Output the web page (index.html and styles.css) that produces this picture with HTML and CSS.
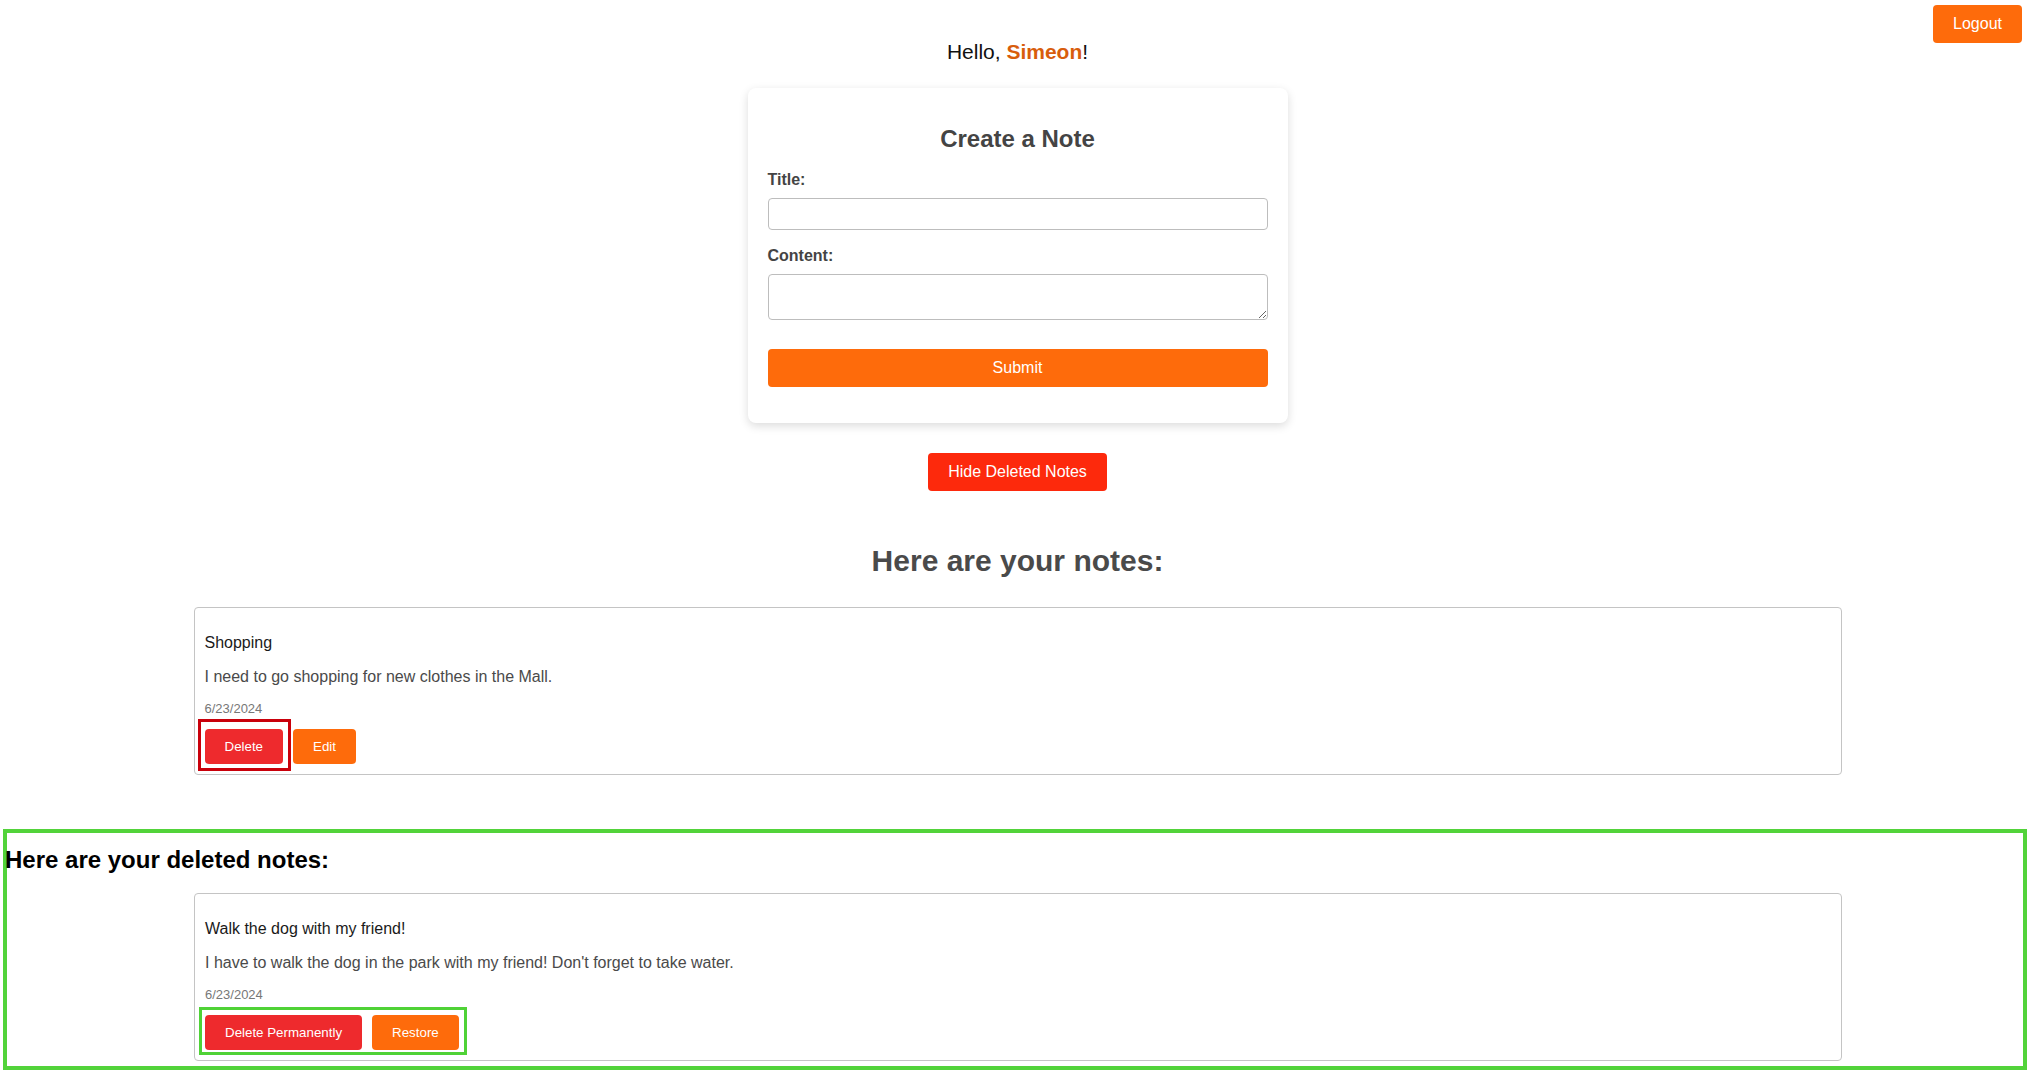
FILE: index.html
```html
<!DOCTYPE html>
<html lang="en">
<head>
<meta charset="utf-8">
<title>Notes</title>
<link rel="stylesheet" href="styles.css">
</head>
<body>
  <header class="topbar">
    <button class="btn btn-orange btn-lg">Logout</button>
  </header>
  <p class="greeting">Hello, <span class="name">Simeon</span>!</p>

  <section class="create-card">
    <h2 class="create-title">Create a Note</h2>
    <form class="create-form">
      <label class="field-label" for="title">Title:</label>
      <input class="field-input" id="title" type="text">
      <label class="field-label" for="content">Content:</label>
      <textarea class="field-area" id="content"></textarea>
      <button type="button" class="btn btn-orange btn-lg btn-block">Submit</button>
    </form>
  </section>

  <div class="toggle-row">
    <button class="btn btn-red btn-lg">Hide Deleted Notes</button>
  </div>

  <h2 class="notes-heading">Here are your notes:</h2>
  <div class="notes-list">
    <article class="note">
      <h3 class="note-title">Shopping</h3>
      <p class="note-content">I need to go shopping for new clothes in the Mall.</p>
      <small class="note-date">6/23/2024</small>
      <div class="note-actions">
        <span class="mark mark-red"><button class="btn btn-del btn-sm">Delete</button></span>
        <button class="btn btn-orange btn-sm">Edit</button>
      </div>
    </article>
  </div>

  <section class="deleted">
    <h2 class="deleted-heading">Here are your deleted notes:</h2>
    <div class="notes-list deleted-list">
      <article class="note">
        <h3 class="note-title">Walk the dog with my friend!</h3>
        <p class="note-content">I have to walk the dog in the park with my friend! Don't forget to take water.</p>
        <small class="note-date">6/23/2024</small>
        <div class="note-actions">
          <span class="mark mark-green">
            <button class="btn btn-del btn-sm">Delete Permanently</button>
            <button class="btn btn-orange btn-sm">Restore</button>
          </span>
        </div>
      </article>
    </div>
  </section>
</body>
</html>
```

FILE: styles.css
```css
* { box-sizing: border-box; }

html, body {
  margin: 0;
  padding: 0;
  background: #fff;
}

body {
  font-family: "Liberation Sans", Arial, Helvetica, sans-serif;
  color: #111;
  overflow: hidden;
}

.btn {
  font-family: "Liberation Sans", Arial, Helvetica, sans-serif;
  border: none;
  border-radius: 4px;
  color: #fff;
  cursor: pointer;
  margin: 0;
}
.btn-lg {
  font-size: 16px;
  line-height: 18px;
  padding: 10px 20px;
}
.btn-sm {
  font-size: 13.333px;
  line-height: 15px;
  padding: 10px 20px;
}
.btn-block {
  display: block;
  width: 100%;
}
.btn-orange { background: #fe6b0b; }
.btn-red { background: #fd290c; }
.btn-del { background: #ee2a2d; }

.topbar {
  display: flex;
  justify-content: flex-end;
  padding: 5px 13px 0 0;
  height: 43px;
}

.greeting {
  margin: -3px 0 0;
  text-align: center;
  font-size: 21px;
  line-height: 24px;
  color: #111;
}
.name {
  color: #d85d0c;
  font-weight: bold;
}

.create-card {
  width: 540px;
  margin: 24px auto 0;
  padding: 20px 20px 36px;
  background: #fff;
  border-radius: 8px;
  box-shadow: 0 3px 10px rgba(0, 0, 0, 0.14);
}
.create-title {
  margin: 17px 0 18px;
  text-align: center;
  font-size: 24px;
  line-height: 28px;
  color: #444;
}
.create-form {
  display: flex;
  flex-direction: column;
}
.field-label {
  font-size: 16px;
  line-height: 18px;
  font-weight: bold;
  color: #444;
}
.field-input {
  margin: 9px 0 17px;
  height: 32px;
  border: 1px solid #bdbdbd;
  border-radius: 4px;
  font-family: inherit;
  font-size: 16px;
  padding: 4px 8px;
}
.field-area {
  margin: 9px 0 29px;
  height: 46px;
  border: 1px solid #bdbdbd;
  border-radius: 4px;
  font-family: inherit;
  font-size: 16px;
  padding: 4px 8px;
}

.toggle-row {
  display: flex;
  justify-content: center;
  margin-top: 30px;
}

.notes-heading {
  margin: 52px 0 0;
  text-align: center;
  font-size: 30px;
  line-height: 35px;
  color: #4a4a4a;
}

.notes-list {
  width: 1648px;
  margin: 29px auto 0;
}

.note {
  border: 1px solid #c4c4c4;
  border-radius: 4px;
  padding: 10px;
}
.note-title {
  margin: 16px 0 0;
  font-size: 16px;
  line-height: 18px;
  font-weight: normal;
  color: #1a1a1a;
}
.note-content {
  margin: 16px 0 0;
  font-size: 16px;
  line-height: 18px;
  color: #4a4a4a;
}
.note-date {
  display: block;
  margin-top: 15px;
  font-size: 13px;
  line-height: 15px;
  color: #777;
}
.note-actions {
  display: flex;
  gap: 10px;
  margin-top: 13px;
}

.mark {
  position: relative;
  display: inline-flex;
  gap: 10px;
}
.mark::after {
  content: "";
  position: absolute;
  pointer-events: none;
}
.mark-red::after {
  top: -10px;
  left: -7px;
  right: -8px;
  bottom: -7px;
  border: 3px solid #c9000b;
}
.mark-green::after {
  top: -8px;
  left: -6px;
  right: -8px;
  bottom: -5px;
  border: 3px solid #4fd236;
}

.deleted {
  margin: 54px 8px 0 3px;
  border: 4px solid #52d33a;
  height: 241px;
}
.deleted-heading {
  margin: 13px 0 0 -2px;
  font-size: 24px;
  line-height: 28px;
  color: #000;
}
.deleted-list {
  margin: 19px 0 0 187px;
}
```
